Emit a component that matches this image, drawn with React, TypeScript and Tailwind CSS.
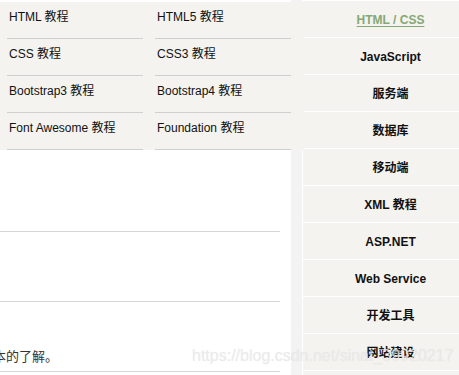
import React from 'react';

const menuItems = [
  ['HTML 教程', 'HTML5 教程'],
  ['CSS 教程', 'CSS3 教程'],
  ['Bootstrap3 教程', 'Bootstrap4 教程'],
  ['Font Awesome 教程', 'Foundation 教程'],
];

const sideItems = [
  'HTML / CSS',
  'JavaScript',
  '服务端',
  '数据库',
  '移动端',
  'XML 教程',
  'ASP.NET',
  'Web Service',
  '开发工具',
  '网站建设',
];

const font = "font-['Liberation_Sans','Noto_Sans_CJK_SC',sans-serif]";

export default function App() {
  return (
    <div className={`relative w-[459px] h-[375px] overflow-hidden bg-white ${font}`}>
      <div className="flex h-full">
        {/* main content */}
        <div className="w-[291px] shrink-0 pr-[11px]">
          <div className="h-[232px] border-b border-[#d6d6d6]" />
          <div className="h-[70px] border-b border-[#d6d6d6]" />
          <div className="h-[70px] border-b border-[#d6d6d6] flex items-end pb-[7px] overflow-hidden">
            <span className="whitespace-nowrap ml-[-20px] text-[13px] leading-[16px] text-[#333] font-['Noto_Sans_CJK_SC',sans-serif]">
              基本的了解。
            </span>
          </div>
        </div>

        {/* gray strip */}
        <div className="w-[12px] shrink-0 bg-[#f3f3f4] border-r border-white" />

        {/* sidebar */}
        <div className="w-[175px] shrink-0 bg-[#f4f3ef] border-t border-white">
          {sideItems.map((item, i) => (
            <div
              key={i}
              className="h-[37px] border-b border-white flex items-center justify-center pt-[1px] text-[12px] font-bold"
            >
              {i === 0 ? (
                <span className="text-[#86a874] underline underline-offset-2">{item}</span>
              ) : (
                <span className="text-[#111]">{item}</span>
              )}
            </div>
          ))}
        </div>
      </div>

      {/* dropdown panel */}
      <div className="absolute left-0 top-[2px] w-[304px] bg-[#f4f3ef] pl-[7px]">
        {menuItems.map((row, i) => (
          <div key={i} className="flex gap-[12px]">
            {row.map((item, j) => (
              <div
                key={j}
                className="w-[136px] h-[37px] border-b border-[#cfcfcf] pl-[2px] pt-[8px] text-[12px] leading-[14px] text-[#111]"
              >
                {item}
              </div>
            ))}
          </div>
        ))}
      </div>

      {/* watermark */}
      <div className="absolute left-[192px] top-[346px] whitespace-nowrap text-[16px] leading-[20px] text-[rgba(235,235,235,0.85)] [text-shadow:0_0_1px_rgba(160,160,160,0.2)] font-['Liberation_Sans',sans-serif] pointer-events-none">
        https://blog.csdn.net/sinat_39920217
      </div>
    </div>
  );
}
